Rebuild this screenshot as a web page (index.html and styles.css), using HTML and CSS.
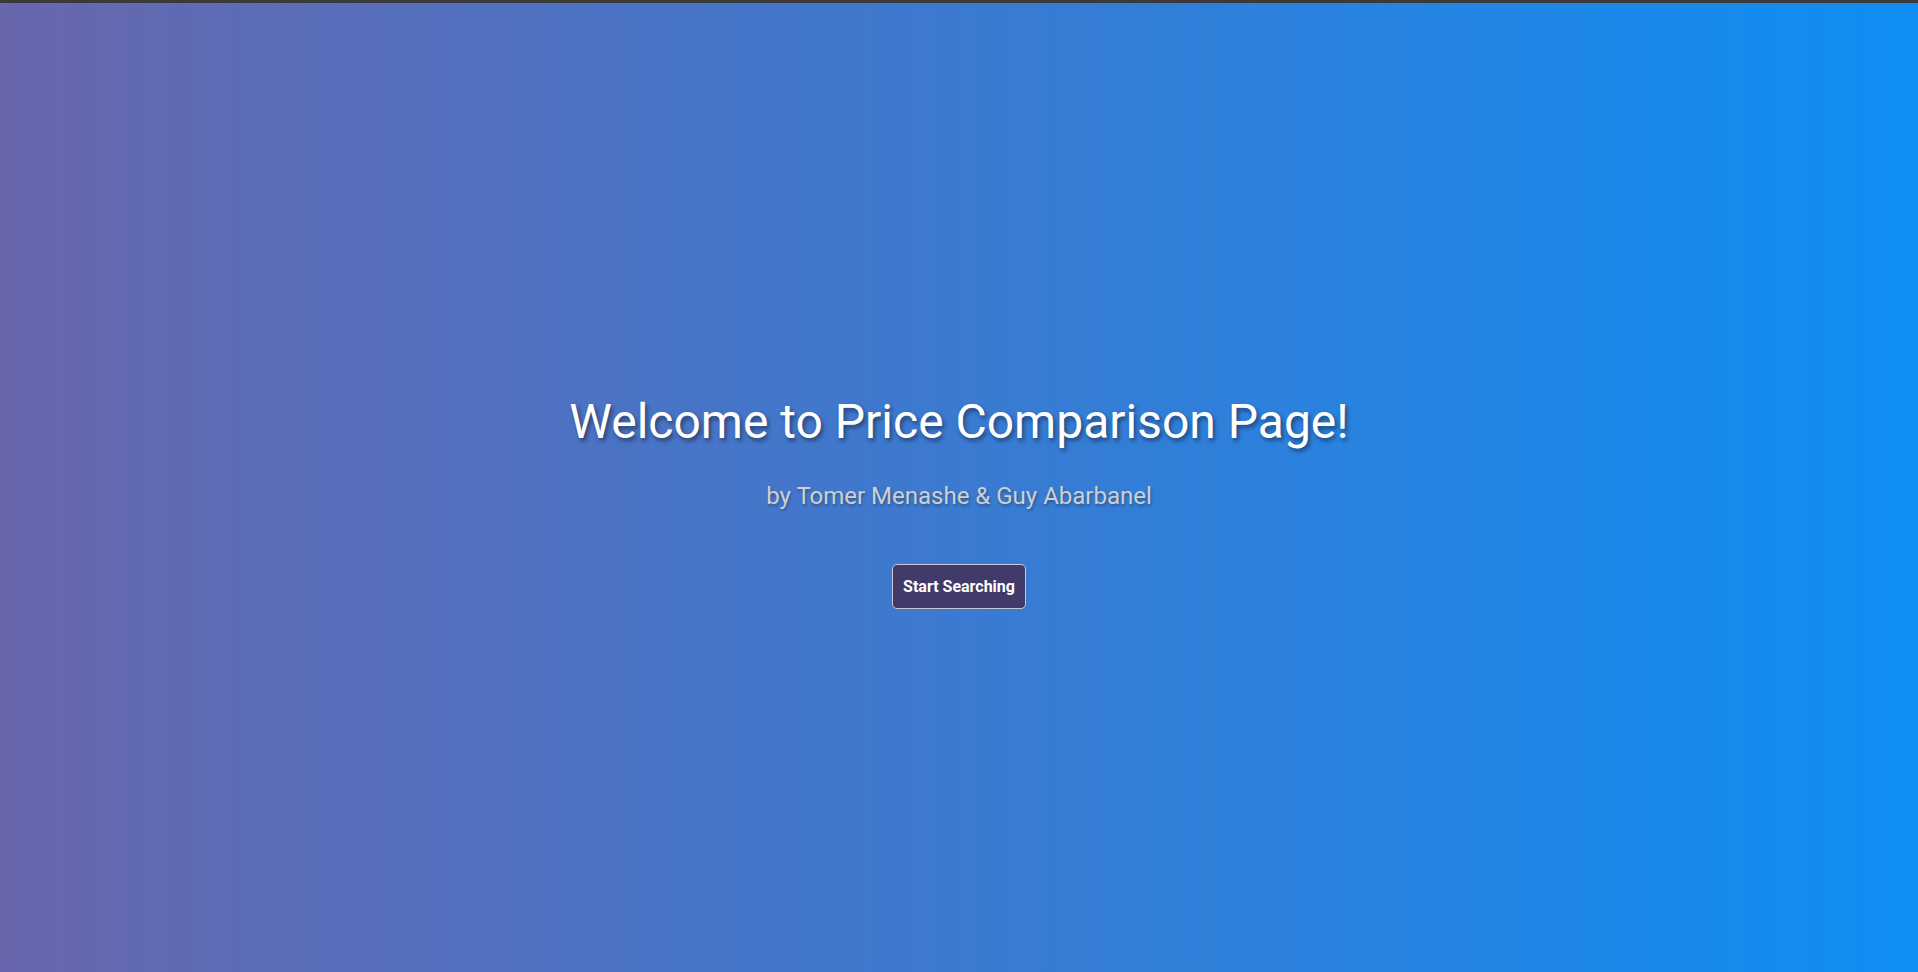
FILE: index.html
```html
<!DOCTYPE html>
<html lang="en">
<head>
<meta charset="utf-8">
<title>Price Comparison</title>
<link rel="stylesheet" href="styles.css">
</head>
<body>
<main class="hero">
  <h1 class="hero-title">Welcome to Price Comparison Page!</h1>
  <p class="hero-subtitle">by Tomer Menashe &amp; Guy Abarbanel</p>
  <button class="hero-button" type="button">Start Searching</button>
</main>
</body>
</html>
```
FILE: styles.css
```css
html, body {
  margin: 0;
  padding: 0;
  height: 100%;
}
body {
  box-sizing: border-box;
  border-top: 3px solid #3a3a3a;
  background: linear-gradient(to right, #6866ad, #0e8ef4);
  font-family: Roboto, "Liberation Sans", sans-serif;
}
.hero {
  box-sizing: border-box;
  height: 100%;
  display: flex;
  flex-direction: column;
  align-items: center;
  justify-content: center;
  padding-top: 28px;
}
.hero-title {
  margin: 0;
  font-size: 48px;
  font-weight: 400;
  line-height: 56px;
  color: #ffffff;
  text-shadow: 2px 3px 4px rgba(0, 0, 0, 0.45);
}
.hero-subtitle {
  margin: 32px 0 0;
  font-size: 24px;
  line-height: 28px;
  color: #cfcfcf;
  text-shadow: 1px 2px 3px rgba(0, 0, 0, 0.3);
}
.hero-button {
  margin-top: 54px;
  padding: 12px 10px;
  font-family: Roboto, "Liberation Sans", sans-serif;
  font-size: 16px;
  font-weight: 700;
  color: #ffffff;
  background: #433a6c;
  border: 1px solid #c9c9d6;
  border-radius: 5px;
  cursor: pointer;
}
```
